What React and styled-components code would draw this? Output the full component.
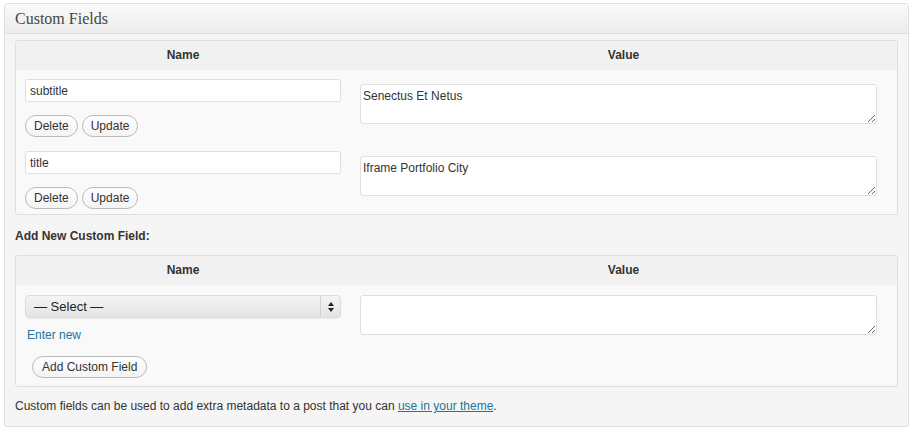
import styled, { createGlobalStyle } from "styled-components";

const GlobalStyle = createGlobalStyle`
  body {
    margin: 0;
    padding: 3px 4px;
    background: #fff;
    font-family: "Liberation Sans", Arial, sans-serif;
    color: #333;
  }
`;

const Postbox = styled.div`
  width: 903px;
  border: 1px solid #dfdfdf;
  border-radius: 3px;
  background: #f5f5f5;
  box-shadow: inset 0 1px 0 #fff;
`;

const Handle = styled.h3`
  margin: 0;
  height: 29px;
  padding: 0 10px;
  display: flex;
  align-items: center;
  border-bottom: 1px solid #dfdfdf;
  background: linear-gradient(to bottom, #f9f9f9, #ececec);
  font-family: "Liberation Serif", Georgia, serif;
  font-weight: normal;
  font-size: 16px;
  color: #464646;
`;

const Inside = styled.div`
  padding: 6px 10px 13px;
  display: flex;
  flex-direction: column;
`;

const Table = styled.div`
  display: grid;
  grid-template-columns: 334px 1fr;
  border: 1px solid #dfdfdf;
  border-radius: 3px;
  background: #f9f9f9;
`;

const HeadCell = styled.div`
  height: 28px;
  padding-bottom: 1px;
  display: flex;
  align-items: center;
  justify-content: center;
  background: #f1f1f1;
  font-size: 12px;
  font-weight: bold;
  color: #333;
`;

const NameCell = styled.div`
  padding: ${(p) => p.$pad || "9px 9px 5px 9px"};
  display: flex;
  flex-direction: column;
  align-items: flex-start;
`;

const ValueCell = styled.div`
  padding: ${(p) => p.$pad || "14px 20px 6px 10px"};
`;

const TextInput = styled.input`
  box-sizing: border-box;
  width: 316px;
  height: 23px;
  margin: 0;
  padding: 2px 4px;
  border: 1px solid #dfdfdf;
  border-radius: 3px;
  background: #fff;
  font-family: "Liberation Sans", Arial, sans-serif;
  font-size: 12px;
  color: #333;
  outline: none;
`;

const TextArea = styled.textarea`
  display: block;
  box-sizing: border-box;
  width: 100%;
  height: 40px;
  margin: 0;
  padding: 4px 2px;
  border: 1px solid #dfdfdf;
  border-radius: 3px;
  background: #fff;
  font-family: "Liberation Sans", Arial, sans-serif;
  font-size: 12px;
  color: #333;
  outline: none;
`;

const Buttons = styled.div`
  display: flex;
  gap: 4px;
  margin-top: ${(p) => p.$top || "13px"};
  margin-left: ${(p) => p.$left || "0"};
`;

const Button = styled.button`
  height: 22px;
  padding: 0 ${(p) => p.$px || "8px"};
  border: 1px solid #bbb;
  border-radius: 11px;
  background: linear-gradient(to bottom, #fefefe, #f4f4f4);
  font-family: "Liberation Sans", Arial, sans-serif;
  font-size: 12px;
  color: #333;
  cursor: pointer;
`;

const SubHeading = styled.p`
  margin: 14px 0 12px;
  font-size: 12px;
  font-weight: bold;
  color: #333;
`;

const SelectWrap = styled.div`
  position: relative;
  box-sizing: border-box;
  width: 316px;
  height: 23px;
  border: 1px solid #dcdcdc;
  border-radius: 4px;
  background: linear-gradient(to bottom, #f4f4f4, #ececec 50%, #e3e3e3);
  box-shadow: 0 1px 1px rgba(0, 0, 0, 0.04);
`;

const Select = styled.select`
  appearance: none;
  width: 100%;
  height: 100%;
  margin: 0;
  padding: 0 28px 0 8px;
  border: none;
  background: transparent;
  font-family: "Liberation Sans", Arial, sans-serif;
  font-size: 13px;
  color: #222;
  outline: none;
`;

const Arrows = styled.span`
  position: absolute;
  top: 0;
  right: 0;
  bottom: 0;
  width: 19px;
  display: flex;
  align-items: center;
  justify-content: center;
  border-left: 1px solid #d2d2d2;
  pointer-events: none;
`;

const EnterNew = styled.a`
  margin: 10px 0 0 2px;
  font-size: 12px;
  color: #21759b;
  text-decoration: none;
`;

const Footer = styled.p`
  margin: 12px 0 0;
  font-size: 12px;
  color: #333;

  a {
    color: #21759b;
  }
`;

const fields = [
  { key: "subtitle", value: "Senectus Et Netus" },
  { key: "title", value: "Iframe Portfolio City" },
];

export default function App() {
  return (
    <>
      <GlobalStyle />
      <Postbox>
        <Handle>Custom Fields</Handle>
        <Inside>
          <Table>
            <HeadCell>Name</HeadCell>
            <HeadCell>Value</HeadCell>
            {fields.map((f) => (
              <>
                <NameCell key={f.key}>
                  <TextInput defaultValue={f.key} />
                  <Buttons>
                    <Button>Delete</Button>
                    <Button>Update</Button>
                  </Buttons>
                </NameCell>
                <ValueCell key={f.key + "v"}>
                  <TextArea defaultValue={f.value} />
                </ValueCell>
              </>
            ))}
          </Table>

          <SubHeading>Add New Custom Field:</SubHeading>

          <Table>
            <HeadCell>Name</HeadCell>
            <HeadCell>Value</HeadCell>
            <NameCell $pad="10px 9px 8px 9px">
              <SelectWrap>
                <Select defaultValue="">
                  <option value="">— Select —</option>
                  <option value="subtitle">subtitle</option>
                  <option value="title">title</option>
                </Select>
                <Arrows>
                  <svg width="6" height="10" viewBox="0 0 6 10">
                    <path d="M3 0 L6 4 H0 Z" fill="#222" />
                    <path d="M3 10 L6 6 H0 Z" fill="#222" />
                  </svg>
                </Arrows>
              </SelectWrap>
              <EnterNew href="#">Enter new</EnterNew>
              <Buttons $top="14px" $left="7px">
                <Button $px="9px">Add Custom Field</Button>
              </Buttons>
            </NameCell>
            <ValueCell $pad="10px 20px 6px 10px">
              <TextArea />
            </ValueCell>
          </Table>

          <Footer>
            Custom fields can be used to add extra metadata to a post that you can{" "}
            <a href="#">use in your theme</a>.
          </Footer>
        </Inside>
      </Postbox>
    </>
  );
}
